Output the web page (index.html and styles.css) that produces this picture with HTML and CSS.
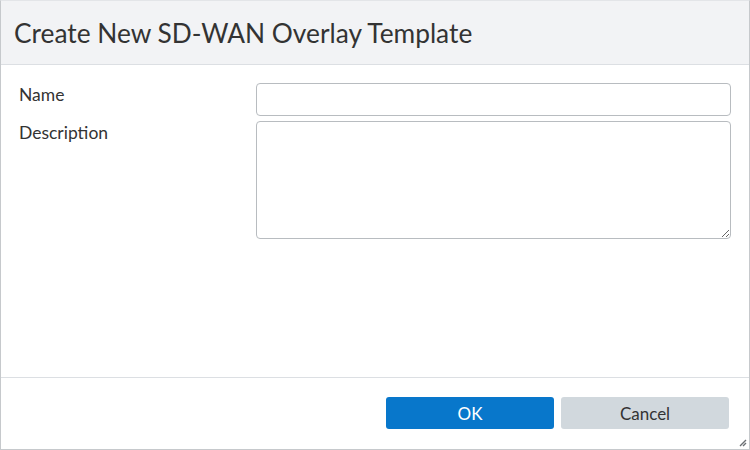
FILE: index.html
```html
<!DOCTYPE html>
<html lang="en">

<head>
    <meta charset="UTF-8">
    <meta name="viewport" content="width=device-width, initial-scale=1.0">
    <title>Create New SD-WAN Overlay Template</title>
    <link rel="stylesheet" href="styles.css">
</head>

<body>
    <div class="dialog">
        <div class="dialog-header">
            <h1>Create New SD-WAN Overlay Template</h1>
        </div>

        <div class="dialog-body">
            <div class="form-row">
                <label for="name">Name</label>
                <input type="text" id="name" class="field">
            </div>
            <div class="form-row">
                <label for="description">Description</label>
                <textarea id="description" class="field field-area"></textarea>
            </div>
        </div>

        <div class="dialog-footer">
            <a href="#" class="button button-primary">OK</a>
            <a href="#" class="button button-secondary">Cancel</a>
        </div>

        <!-- resize grip of the dialog -->
        <svg class="grip" width="9" height="9" viewBox="0 0 9 9">
            <path d="M8 2 L2 8 M8 5 L5 8" stroke="#6b6f73" stroke-width="1.4" fill="none"></path>
        </svg>
    </div>
</body>

</html>
```

FILE: styles.css
```css
body {
    margin: 0;
    padding: 0;
    background-color: #fff;
    font-family: Lato, "Open Sans", sans-serif;
    color: #333;
}

.dialog {
    position: relative;
    width: 750px;
    height: 450px;
    box-sizing: border-box;
    border: 1px solid #c6c9cc;
    border-top-color: #e3e5e8;
    display: flex;
    flex-direction: column;
    background-color: #fff;
}

.dialog-header {
    height: 63px;
    background-color: #f2f3f5;
    border-bottom: 1px solid #dcdfe3;
    display: flex;
    align-items: center;
    padding: 0 13px;
}

.dialog-header h1 {
    margin: 0;
    font-size: 26.3px;
    font-weight: normal;
    color: #333;
    padding-top: 1px;
}

.dialog-body {
    flex: 1;
    padding: 18px 18px 0 18px;
    display: flex;
    flex-direction: column;
    gap: 5px;
}

.form-row {
    display: flex;
    align-items: flex-start;
}

.form-row label {
    width: 237px;
    flex-shrink: 0;
    font-size: 17.5px;
    line-height: 20px;
    padding-top: 2px;
    color: #333;
}

.field {
    flex: 1;
    box-sizing: border-box;
    height: 33px;
    margin: 0;
    border: 1px solid #b8bcc0;
    border-radius: 4px;
    font-family: inherit;
    font-size: 14px;
    padding: 4px 8px;
    background-color: #fff;
}

.field-area {
    height: 118px;
    resize: both;
}

.dialog-footer {
    height: 72px;
    border-top: 1px solid #dcdfe3;
    display: flex;
    justify-content: flex-end;
    align-items: flex-start;
    gap: 7px;
    padding: 19px 20px 0 0;
    box-sizing: border-box;
}

.button {
    display: inline-flex;
    align-items: center;
    justify-content: center;
    width: 168px;
    height: 32px;
    border-radius: 3px;
    text-decoration: none;
    font-size: 17px;
}

.button-primary {
    background-color: #0877cb;
    color: #fff;
}

.button-secondary {
    background-color: #d1d8dd;
    color: #333;
}

.grip {
    position: absolute;
    right: 2px;
    bottom: 2px;
}
```
